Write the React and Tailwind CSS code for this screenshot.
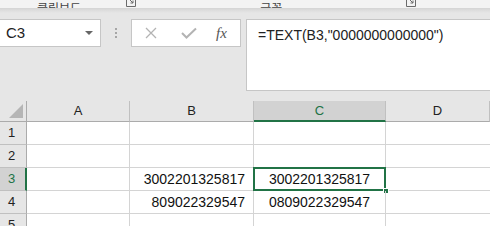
import React from 'react';

const cellFont = { fontFamily: '"Liberation Sans", Arial, sans-serif' };

function Launcher() {
  return (
    <svg width="10" height="8" viewBox="0 0 10 8" className="text-[#6b6b6b]">
      <path d="M0.5 0 V7.5 H9.5 V0" fill="none" stroke="currentColor" strokeWidth="1" />
      <path d="M3 0 L7 4 M7 1.5 V4 H4.5" fill="none" stroke="currentColor" strokeWidth="1" />
    </svg>
  );
}

export default function App() {
  const cols = ['A', 'B', 'C', 'D'];
  const rows = [
    { n: 1, b: '', c: '' },
    { n: 2, b: '', c: '' },
    { n: 3, b: '3002201325817', c: '3002201325817' },
    { n: 4, b: '809022329547', c: '0809022329547' },
    { n: 5, b: '', c: '' },
  ];

  return (
    <div className="w-[490px] h-[226px] overflow-hidden bg-[#e6e6e6] flex flex-col" style={cellFont}>
      {/* ribbon bottom edge */}
      <div className="h-[9px] shrink-0 bg-[#f3f3f3] border-b border-[#d6d6d6] flex items-end overflow-hidden text-[12px] leading-[14px] text-[#444]" style={{ fontFamily: '"Noto Sans CJK KR", sans-serif' }}>
        <span className="ml-[37px] mb-[-7px]">클립보드</span>
        <span className="ml-[45px] mb-[1px]"><Launcher /></span>
        <span className="ml-[124px] mb-[-7px]">글꼴</span>
        <span className="ml-[124px] mb-[1px]"><Launcher /></span>
      </div>
      <div className="h-[4px] shrink-0 bg-gradient-to-b from-[#d8d8d8] to-[#e6e6e6]" />

      {/* name box + formula bar */}
      <div className="mt-[6px] flex items-start h-[72px] shrink-0">
        <div className="ml-[-1px] w-[102px] h-[28px] bg-white border border-[#c6c6c6] flex items-center justify-between pl-[6px] pr-[7px]">
          <span className="text-[15px] text-[#222]">C3</span>
          <span className="w-0 h-0 border-l-[4px] border-r-[4px] border-t-[4px] border-l-transparent border-r-transparent border-t-[#666]" />
        </div>
        <div className="w-[30px] h-[28px] flex flex-col items-center justify-center gap-[2px]">
          <span className="w-[2px] h-[2px] bg-[#a6a6a6]" />
          <span className="w-[2px] h-[2px] bg-[#a6a6a6]" />
          <span className="w-[2px] h-[2px] bg-[#a6a6a6]" />
        </div>
        <div className="w-[110px] h-[28px] bg-white border border-[#c6c6c6] flex items-center">
          <svg width="12" height="12" viewBox="0 0 12 12" className="ml-[13px]">
            <path d="M1 1 L11 11 M11 1 L1 11" stroke="#b3b3b3" strokeWidth="1.3" />
          </svg>
          <svg width="16" height="12" viewBox="0 0 16 12" className="ml-[24px]">
            <path d="M1 6 L5.5 10.5 L15 1.5" fill="none" stroke="#b3b3b3" strokeWidth="2" />
          </svg>
          <span className="ml-[19px] text-[15px] italic text-[#555]" style={{ fontFamily: '"Liberation Serif", serif' }}>fx</span>
        </div>
        <div className="ml-[5px] flex-1 h-[72px] bg-white border border-r-0 border-[#c6c6c6] pl-[11px] pt-[3px]">
          <span className="text-[14px] text-[#222] leading-[18px]">=TEXT(B3,"0000000000000")</span>
        </div>
      </div>

      {/* grid */}
      <div className="mt-[10px] flex-1 bg-white">
        <div className="grid grid-cols-[27px_103px_124px_132px_1fr]">
          {/* header row */}
          <div className="h-[21px] bg-[#e6e6e6] border-r border-b border-[#ababab] relative">
            <svg className="absolute right-[3px] bottom-[3px]" width="14" height="14" viewBox="0 0 14 14">
              <path d="M14 0 L14 14 L0 14 Z" fill="#b5b5b5" />
            </svg>
          </div>
          {cols.map((c) =>
            c === 'C' ? (
              <div key={c} className="h-[21px] bg-[#d2d2d2] border-r border-[#c0c0c0] border-b-2 border-b-[#217346] flex items-center justify-center text-[13px] text-[#217346]">
                {c}
              </div>
            ) : (
              <div key={c} className="h-[21px] bg-[#e6e6e6] border-r border-[#c0c0c0] border-b border-b-[#ababab] flex items-center justify-center text-[13px] text-[#222]">
                {c}
              </div>
            )
          )}

          {rows.map((r) => (
            <React.Fragment key={r.n}>
              {r.n === 3 ? (
                <div className="h-[23px] bg-[#d2d2d2] border-r-2 border-r-[#217346] border-b border-b-[#c0c0c0] flex items-center pl-[8px] text-[13px] text-[#217346]">
                  {r.n}
                </div>
              ) : (
                <div className="h-[23px] bg-[#e6e6e6] border-r border-r-[#ababab] border-b border-b-[#c0c0c0] flex items-center pl-[8px] text-[13px] text-[#222]">
                  {r.n}
                </div>
              )}
              <div className="h-[23px] border-r border-b border-[#d4d4d4]" />
              <div className="h-[23px] border-r border-b border-[#d4d4d4] flex items-center justify-end pr-[8px] text-[14px] text-[#111]">
                {r.b}
              </div>
              <div className="h-[23px] border-r border-b border-[#d4d4d4] flex items-center justify-center text-[14px] text-[#111] relative">
                {r.c}
                {r.n === 3 && (
                  <>
                    <div className="absolute left-[-1px] top-[-1px] right-[-1px] bottom-[-1px] border-2 border-[#217346]" />
                    <div className="absolute right-[-4px] bottom-[-4px] w-[6px] h-[6px] bg-[#217346] border border-white" />
                  </>
                )}
              </div>
              <div className="h-[23px] border-b border-[#d4d4d4]" />
            </React.Fragment>
          ))}
        </div>
      </div>
    </div>
  );
}
